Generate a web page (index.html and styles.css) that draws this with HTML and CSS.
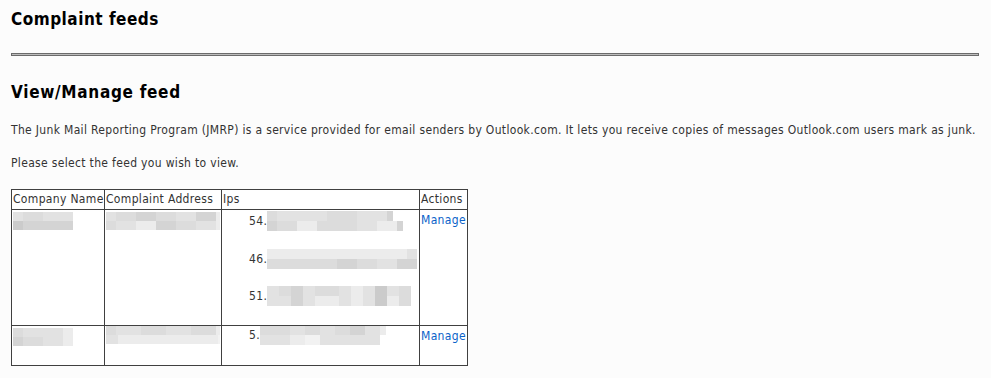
FILE: index.html
```html
<!DOCTYPE html>
<html lang="en">
<head>
<meta charset="utf-8">
<title>Complaint feeds</title>
<link rel="stylesheet" href="styles.css">
</head>
<body>
<main class="page">
  <h1 class="title">Complaint feeds</h1>
  <div class="rule"></div>
  <h2 class="title sub">View/Manage feed</h2>
  <p class="text">The Junk Mail Reporting Program (JMRP) is a service provided for email senders by Outlook.com. It lets you receive copies of messages Outlook.com users mark as junk.</p>
  <p class="text">Please select the feed you wish to view.</p>

  <table class="feeds">
    <colgroup>
      <col class="c-name">
      <col class="c-addr">
      <col class="c-ips">
      <col class="c-act">
    </colgroup>
    <thead>
      <tr>
        <th>Company Name</th>
        <th>Complaint Address</th>
        <th>Ips</th>
        <th>Actions</th>
      </tr>
    </thead>
    <tbody>
      <tr class="row-tall">
        <td>
          <div class="mask">
            <div class="strip"><i class="g1 w10"></i><i class="g2 w20"></i><i class="g1 w30"></i></div>
            <div class="strip"><i class="g4 w10"></i><i class="g3 w50"></i></div>
          </div>
        </td>
        <td>
          <div class="mask">
            <div class="strip"><i class="g1 w10"></i><i class="g2 w20"></i><i class="g3 w20"></i><i class="g2 w20"></i><i class="g1 w20"></i><i class="g3 w20"></i><i class="g0 w4"></i></div>
            <div class="strip"><i class="g2 w10"></i><i class="g1 w20"></i><i class="g0 w20"></i><i class="g3 w20"></i><i class="g2 w20"></i><i class="g1 w20"></i><i class="g0 w4"></i></div>
          </div>
        </td>
        <td class="ips">
          <ul class="ip-list">
            <li><span class="oct">54.</span><span class="mask ip"><span class="strip"><i class="g2 w10"></i><i class="g1 w20"></i><i class="g1 w30"></i><i class="g2 w30"></i><i class="g1 w30"></i><i class="g3 w6"></i></span><span class="strip"><i class="g3 w10"></i><i class="g2 w20"></i><i class="g0 w20"></i><i class="g2 w20"></i><i class="g2 w20"></i><i class="g1 w20"></i><i class="g0 w20"></i><i class="g3 w6"></i></span></span></li>
            <li><span class="oct">46.</span><span class="mask ip"><span class="strip"><i class="g0 w30"></i><i class="g0 w30"></i><i class="g0 w30"></i><i class="g0 w30"></i><i class="g0 w20"></i><i class="g1 w10"></i></span><span class="strip"><i class="g2 w10"></i><i class="g2 w20"></i><i class="g2 w20"></i><i class="g2 w20"></i><i class="g3 w20"></i><i class="g2 w20"></i><i class="g1 w20"></i><i class="g3 w20"></i></span></span></li>
            <li><span class="oct">51.</span><span class="mask ip"><span class="strip"><i class="g1 w12"></i><i class="g2 w12"></i><i class="g3 w12"></i><i class="g1 w12"></i><i class="g2 w24"></i><i class="g1 w12"></i><i class="g0 w12"></i><i class="g1 w12"></i><i class="g4 w12"></i><i class="g1 w12"></i><i class="g2 w12"></i></span><span class="strip"><i class="g1 w12"></i><i class="g1 w12"></i><i class="g3 w12"></i><i class="g1 w12"></i><i class="g0 w24"></i><i class="g1 w12"></i><i class="g0 w12"></i><i class="g1 w12"></i><i class="g4 w12"></i><i class="g0 w12"></i><i class="g2 w12"></i></span></span></li>
          </ul>
        </td>
        <td class="act"><a href="#" class="manage">Manage</a></td>
      </tr>
      <tr class="row-short">
        <td>
          <div class="mask">
            <div class="strip"><i class="g2 w10"></i><i class="g1 w40"></i><i class="g0 w10"></i></div>
            <div class="strip"><i class="g3 w10"></i><i class="g2 w20"></i><i class="g1 w20"></i><i class="g0 w10"></i></div>
          </div>
        </td>
        <td>
          <div class="mask wide">
            <div class="strip"><i class="g2 w10"></i><i class="g1 w25"></i><i class="g2 w25"></i><i class="g1 w25"></i><i class="g2 w25"></i><i class="g0 w4"></i></div>
            <div class="strip"><i class="g1 w12"></i><i class="g0 w25"></i><i class="g0 w25"></i><i class="g0 w25"></i><i class="g0 w25"></i><i class="g-1 w2"></i></div>
          </div>
        </td>
        <td class="ips">
          <ul class="ip-list first">
            <li><span class="oct">5.</span><span class="mask ip"><span class="strip"><i class="g2 w15"></i><i class="g2 w15"></i><i class="g1 w15"></i><i class="g2 w15"></i><i class="g1 w15"></i><i class="g2 w15"></i><i class="g3 w15"></i><i class="g1 w15"></i><i class="g0 w6"></i></span><span class="strip"><i class="g1 w15"></i><i class="g1 w15"></i><i class="g0 w15"></i><i class="g-1 w15"></i><i class="g1 w15"></i><i class="g1 w15"></i><i class="g1 w15"></i><i class="g1 w15"></i></span></span></li>
          </ul>
        </td>
        <td class="act"><a href="#" class="manage">Manage</a></td>
      </tr>
    </tbody>
  </table>
</main>
</body>
</html>
```

FILE: styles.css
```css
html, body {
  margin: 0;
  background: #fcfcfc;
}

.page {
  padding: 10px 12px 0 11px;
  font-family: "DejaVu Sans Condensed", "DejaVu Sans", sans-serif;
  font-size: 12px;
  letter-spacing: 0.33px;
  color: #333;
}

.title {
  margin: 0;
  font-size: 17px;
  font-weight: bold;
  letter-spacing: 0.5px;
  color: #000;
  line-height: 18px;
}

.sub {
  margin-top: 27px;
  letter-spacing: 0.7px;
}

.rule {
  margin-top: 25px;
  height: 1px;
  border: 1px solid #6b6b6b;
  background: #bdbdbd;
}

.text {
  margin: 22px 0 0;
  line-height: 14px;
}

.text + .text {
  margin-top: 19px;
}

.feeds {
  margin-top: 19px;
  border-collapse: collapse;
  table-layout: fixed;
  width: 457px;
  background: #fff;
}

.c-name { width: 93px; }
.c-addr { width: 117px; }
.c-ips  { width: 198px; }
.c-act  { width: 48px; }

.feeds th,
.feeds td {
  border: 1px solid #404040;
  padding: 0 1px;
  vertical-align: top;
  text-align: left;
  white-space: nowrap;
  overflow: hidden;
}

.feeds th {
  font-weight: normal;
  height: 19px;
  line-height: 19px;
}

.row-tall td { height: 115px; }
.row-short td { height: 39px; }

.mask {
  display: block;
  padding-top: 2px;
}

.mask.wide { padding-top: 0; }

.strip {
  display: flex;
  height: 9px;
}

.strip i {
  display: block;
  flex: none;
  height: 100%;
}

.g-1 { background: #f2f2f2; }
.g0 { background: #ececec; }
.g1 { background: #e2e2e2; }
.g2 { background: #dcdcdc; }
.g3 { background: #d4d4d4; }
.g4 { background: #cbcbcb; }

.w2 { width: 2px; }
.w4 { width: 4px; }
.w6 { width: 6px; }
.w10 { width: 10px; }
.w12 { width: 12px; }
.w15 { width: 15px; }
.w20 { width: 20px; }
.w24 { width: 24px; }
.w25 { width: 25px; }
.w30 { width: 30px; }
.w40 { width: 40px; }
.w50 { width: 50px; }

.ip-list {
  list-style: none;
  margin: 0;
  padding: 0 0 0 26px;
}

.ip-list.first {
  margin-top: -2px;
}

.ip-list li {
  display: flex;
  align-items: center;
  height: 22px;
  margin-bottom: 15.5px;
}

.ip-list li:last-child {
  margin-bottom: 0;
}

.oct {
  line-height: 14px;
}

.mask.ip {
  padding-top: 0;
  display: flex;
  flex-direction: column;
}

.ip .strip { height: 10px; }

.manage {
  display: inline-block;
  margin-top: 3px;
  color: #0a62c9;
  text-decoration: none;
}
```
